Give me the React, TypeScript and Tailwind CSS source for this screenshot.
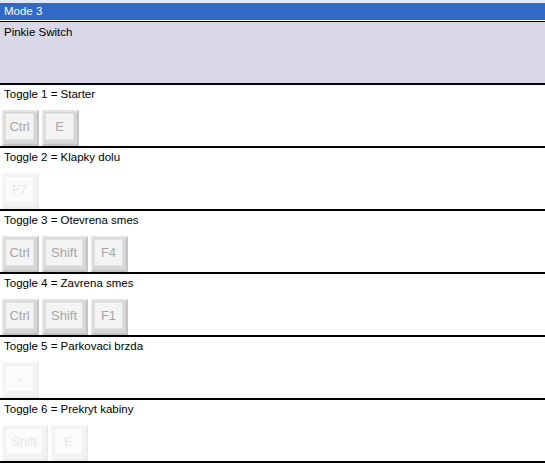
import React from "react";

type KeyDef = { label: string; w?: number };

function Key({ label, w = 37, faded }: { label: string; w?: number; faded?: boolean }) {
  const outer = faded
    ? "bg-[#f3f3f3] border-t-[#f7f7f7] border-l-[#f7f7f7] border-b-[#ececec] border-r-[#ececec]"
    : "bg-[#d6d6d6] border-t-[#e4e4e4] border-l-[#e4e4e4] border-b-[#c4c4c4] border-r-[#c4c4c4]";
  const face = faded
    ? "bg-[#fbfbfb] border-[#f1f1f1] text-[#e6e6e6]"
    : "bg-[#f4f4f4] border-[#e2e2e2] text-[#a6a6a6]";
  return (
    <div
      className={`h-[36px] border-2 pt-[1px] pl-[1px] pr-[3px] pb-[4px] ${outer}`}
      style={{ width: w }}
    >
      <div className={`h-full w-full border flex items-center justify-center text-[13px] ${face}`}>
        {label}
      </div>
    </div>
  );
}

function Row({ title, keys, faded }: { title: string; keys: KeyDef[]; faded?: boolean }) {
  return (
    <div className="h-[63px] border-b-2 border-black flex flex-col">
      <div className="pl-[4px] pt-[2px] h-[25px] text-[11.5px] leading-[14px] text-black">{title}</div>
      <div className="flex gap-[3px] pl-[2px]">
        {keys.map((k, i) => (
          <Key key={i} label={k.label} w={k.w} faded={faded} />
        ))}
      </div>
    </div>
  );
}

export default function App() {
  return (
    <div
      className="w-[545px] h-[464px] bg-white overflow-hidden"
      style={{ fontFamily: '"Liberation Sans", Arial, sans-serif' }}
    >
      <div className="h-[3px] bg-[#dfe8f4]" />
      <div className="h-[17px] bg-[#316ac5] text-white text-[11.5px] leading-[17px] pl-[4px]">Mode 3</div>
      <div className="h-[1px] bg-white" />
      <div className="h-[1px] bg-black" />
      <div className="h-[63px] bg-[#d9d7e8] border-b-2 border-black pl-[4px] pt-[3px] text-[11.5px] leading-[14px] text-black">
        Pinkie Switch
      </div>
      <Row title="Toggle 1 = Starter" keys={[{ label: "Ctrl" }, { label: "E" }]} />
      <Row title="Toggle 2 = Klapky dolu" keys={[{ label: "F7" }]} faded />
      <Row title="Toggle 3 = Otevrena smes" keys={[{ label: "Ctrl" }, { label: "Shift", w: 46 }, { label: "F4" }]} />
      <Row title="Toggle 4 = Zavrena smes" keys={[{ label: "Ctrl" }, { label: "Shift", w: 46 }, { label: "F1" }]} />
      <Row title="Toggle 5 = Parkovaci brzda" keys={[{ label: "-" }]} faded />
      <Row title="Toggle 6 = Prekryt kabiny" keys={[{ label: "Shift", w: 46 }, { label: "E" }]} faded />
    </div>
  );
}
